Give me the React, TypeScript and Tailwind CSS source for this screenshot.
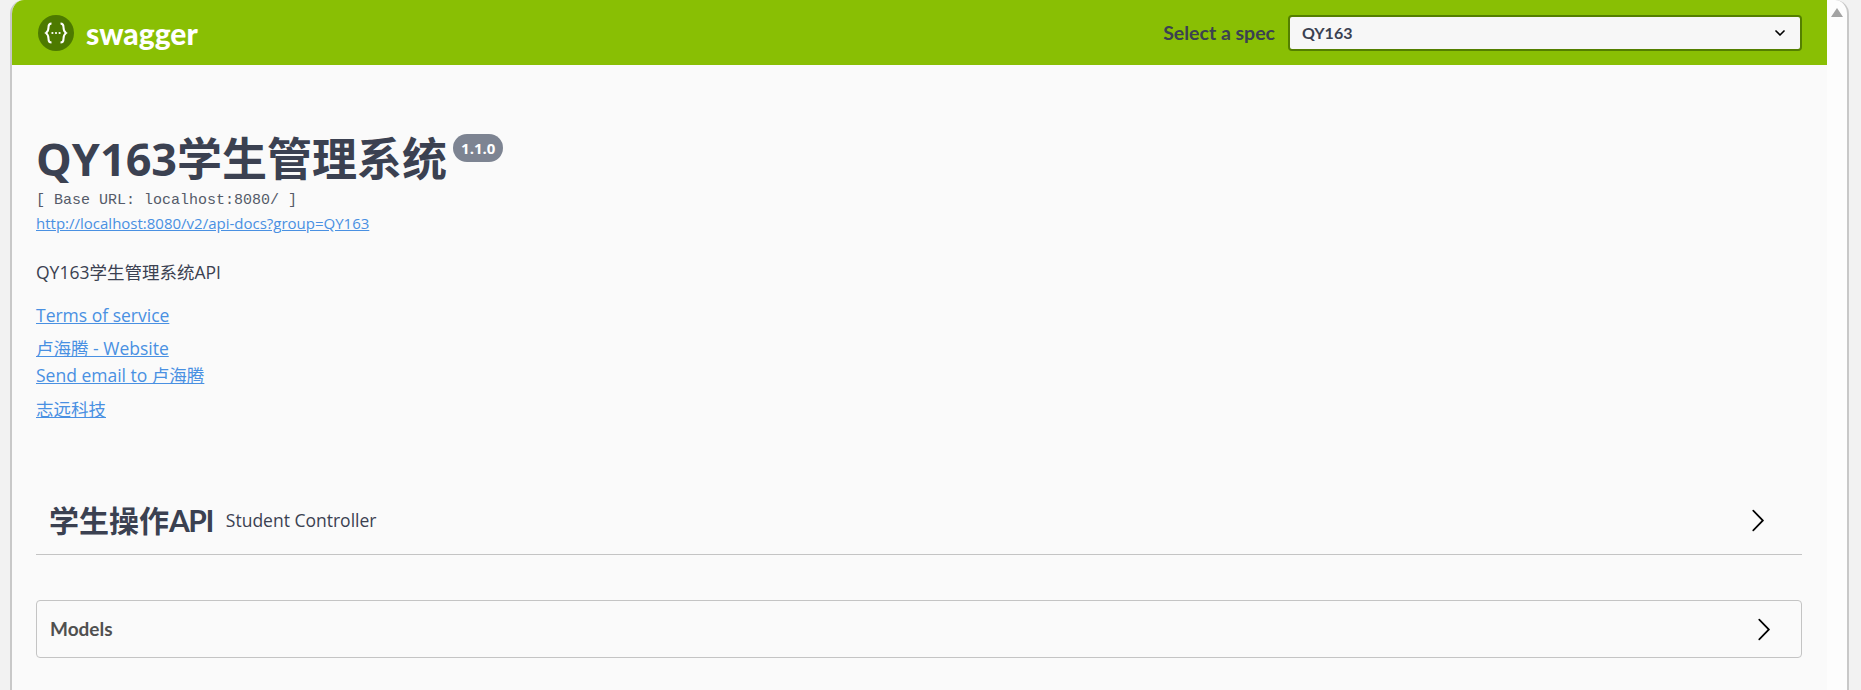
import React from 'react';
import { ChevronDown } from 'lucide-react';

const SANS = "font-['Open_Sans','Noto_Sans_CJK_SC',sans-serif]";
const TITLE = "font-['Lato','Noto_Sans_CJK_SC',sans-serif]";

const Chevron = () => (
  <svg width="25" height="25" viewBox="0 0 20 20" className="shrink-0 fill-black">
    <path d="M13.25 10L6.109 2.58a.697.697 0 0 1 0-.979.68.68 0 0 1 .969 0l7.83 7.908a.697.697 0 0 1 0 .979l-7.83 7.908a.68.68 0 0 1-.969 0 .697.697 0 0 1 0-.979L13.25 10z" />
  </svg>
);

const SwaggerMark = () => (
  <svg width="36" height="36" viewBox="0 0 36 36" className="shrink-0">
    <circle cx="18" cy="18" r="18" fill="#4d7a00" />
    <path d="M13.5 8.5c-2.8 0-3 1.5-3 3.5 0 2.6.1 4.2-2.5 6 2.6 1.8 2.5 3.4 2.5 6 0 2 .2 3.5 3 3.5M22.5 8.5c2.8 0 3 1.5 3 3.5 0 2.6-.1 4.2 2.5 6-2.6 1.8-2.5 3.4-2.5 6 0 2-.2 3.5-3 3.5" fill="none" stroke="#ffffff" strokeWidth="2" />
    <circle cx="14.4" cy="18" r="1.1" fill="#ffffff" />
    <circle cx="18" cy="18" r="1.1" fill="#ffffff" />
    <circle cx="21.6" cy="18" r="1.1" fill="#ffffff" />
  </svg>
);

const App: React.FC = () => {
  return (
    <div className={`h-[690px] w-[1861px] overflow-hidden bg-[#f2f2f2] pl-[10px] pr-[12px] ${SANS}`}>
      <div className="flex h-full rounded-t-[14px] border-x-2 border-[#c8c8c8] bg-[#fdfdfd] overflow-hidden">
        <main className="w-[1815px] shrink-0 bg-[#fafafa]">
          {/* Top bar */}
          <header className="flex h-[65px] items-center justify-between bg-[#89bf04] pl-[26px] pr-[25px]">
            <div className="flex items-center gap-[12px]">
              <SwaggerMark />
              <span className={`text-[30px] font-black leading-none text-white ${TITLE}`}>swagger</span>
            </div>
            <div className="flex items-center gap-[13px]">
              <span className={`text-[19.5px] font-bold text-[#3b4151] ${TITLE}`}>Select a spec</span>
              <div className="flex h-[36px] w-[514px] items-center justify-between rounded-[4px] border-2 border-[#547f00] bg-[#f7f7f7] pl-[12px] pr-[12px]">
                <span className={`text-[16px] font-bold text-[#3b4151] ${TITLE}`}>QY163</span>
                <ChevronDown size={16} strokeWidth={2.5} className="text-black" />
              </div>
            </div>
          </header>

          <div className="pl-[24px] pr-[25px]">
            {/* Info */}
            <section className="pt-[64px]">
              <div className="flex items-start pb-[2px]">
                <h1 className="text-[45px] font-bold leading-[60px] text-[#3b4151]">QY163学生管理系统</h1>
                <span className="ml-[6px] mt-[5px] rounded-[14px] bg-[#7d8492] px-[8px] py-[4px] text-[15px] font-bold leading-[20px] text-white">1.1.0</span>
              </div>
              <p className="font-['Liberation_Mono',monospace] text-[15px] leading-[20px] text-[#555b69]">[ Base URL: localhost:8080/ ]</p>
              <a className="mt-[2px] block text-[15px] leading-[20px] text-[#4990e2] underline">http://localhost:8080/v2/api-docs?group=QY163</a>
              <p className="mt-[28px] text-[17.5px] leading-[22px] text-[#3b4151]">QY163学生管理系统API</p>
              <a className="mt-[20px] block text-[17.5px] leading-[24px] text-[#4990e2] underline">Terms of service</a>
              <a className="mt-[9px] block text-[17.5px] leading-[24px] text-[#4990e2] underline">卢海腾 - Website</a>
              <a className="mt-[3px] block text-[17.5px] leading-[24px] text-[#4990e2] underline">Send email to 卢海腾</a>
              <a className="mt-[10px] block text-[17.5px] leading-[24px] text-[#4990e2] underline">志远科技</a>
            </section>

            {/* Tag */}
            <section className="mt-[67px] flex h-[67px] items-center border-b border-[#c4c4c4] pb-[2px] pl-[13px] pr-[32px]">
              <h3 className={`text-[30px] font-bold text-[#3b4151] ${TITLE}`}>学生操作<span className="tracking-[-1.5px]">API</span></h3>
              <span className="ml-[13px] flex-1 text-[17.5px] text-[#3b4151]">Student Controller</span>
              <Chevron />
            </section>

            {/* Models */}
            <section className="mt-[45px] flex h-[58px] items-center rounded-[4px] border border-[#c4c4c4] pl-[13px] pr-[25px]">
              <h4 className={`flex-1 text-[19px] font-bold text-[#505050] ${TITLE}`}>Models</h4>
              <Chevron />
            </section>
          </div>
        </main>
        {/* Scrollbar */}
        <div className="flex flex-1 justify-center pt-[8px]">
          <div className="h-0 w-0 border-x-[6px] border-b-[9px] border-x-transparent border-b-[#a3a3a3]" />
        </div>
      </div>
    </div>
  );
};

export default App;
